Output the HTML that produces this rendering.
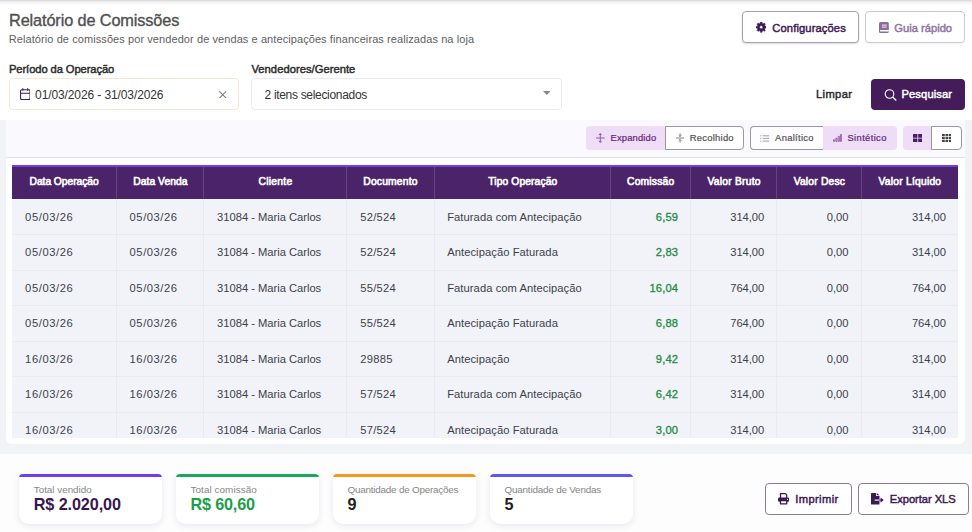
<!DOCTYPE html>
<html>
<head>
<meta charset="utf-8">
<style>
*{box-sizing:border-box;margin:0;padding:0}
html,body{width:972px;height:532px;overflow:hidden;background:#fff;font-family:"Liberation Sans",sans-serif;color:#333}
.abs{position:absolute}
.tx{white-space:pre}
.box{border-radius:4px;background:#fff}
.row{left:12px;width:946px;background:#f2f3f8;border-bottom:1px solid #eaeaf1}
.vl{top:199px;width:1px;height:239px;background:#eaeaf1}
.hl{top:167px;width:1px;height:32px;background:#634681}
.card{top:474px;width:143.300px;height:50px;background:#fff;border-radius:4px 4px 10px 10px;box-shadow:0 2px 6px rgba(60,60,100,.11);overflow:hidden}
.card i{position:absolute;left:0;top:0;width:100%;height:3px}
</style>
</head>
<body>
<!-- backgrounds -->
<div class="abs" style="left:0;top:0;width:972px;height:5px;background:linear-gradient(#d9d9d9,#f3f3f3 45%,#fff)"></div>
<div class="abs" style="left:0;top:120px;width:972px;height:334px;background:#f2f3f7"></div>
<div class="abs" style="left:0;top:454px;width:972px;height:78px;background:#fdfdfe"></div>
<div class="abs" style="left:6px;top:120px;width:959px;height:324px;background:#fff;border-radius:0 0 6px 6px"></div>
<div class="abs" style="left:6px;top:120px;width:959px;height:38px;background:#faf9fe;border-bottom:1px solid #e2dfee"></div>

<!-- table -->
<div class="abs" style="left:12px;top:165px;width:946px;height:273px;overflow:hidden">
  <div class="abs" style="left:0;top:0;width:946px;height:34px;background:#4b2369;border-top:2px solid #6a3ff0"></div>
</div>
<div class="abs row" style="top:199px;height:36px"></div>
<div class="abs row" style="top:235.0px;height:35.5px"></div>
<div class="abs row" style="top:270.5px;height:35.5px"></div>
<div class="abs row" style="top:306.0px;height:35.5px"></div>
<div class="abs row" style="top:341.5px;height:35.5px"></div>
<div class="abs row" style="top:377.0px;height:35.5px"></div>
<div class="abs row" style="border-bottom:none;top:412.5px;height:25.5px"></div>
<div class="abs vl" style="left:115.9px"></div>
<div class="abs hl" style="left:115.9px"></div>
<div class="abs vl" style="left:203.0px"></div>
<div class="abs hl" style="left:203.0px"></div>
<div class="abs vl" style="left:345.9px"></div>
<div class="abs hl" style="left:345.9px"></div>
<div class="abs vl" style="left:434.2px"></div>
<div class="abs hl" style="left:434.2px"></div>
<div class="abs vl" style="left:610.0px"></div>
<div class="abs hl" style="left:610.0px"></div>
<div class="abs vl" style="left:690.0px"></div>
<div class="abs hl" style="left:690.0px"></div>
<div class="abs vl" style="left:776.2px"></div>
<div class="abs hl" style="left:776.2px"></div>
<div class="abs vl" style="left:861.0px"></div>
<div class="abs hl" style="left:861.0px"></div>

<!-- top buttons -->
<div class="abs box" style="left:742px;top:11px;width:117px;height:32px;border:1px solid #aaa0b6;box-shadow:0 1px 2px rgba(0,0,0,.15)"></div>
<div class="abs box" style="left:865px;top:11px;width:100px;height:32px;border:1px solid #cfc8d8;box-shadow:0 1px 1px rgba(0,0,0,.06)"></div>
<svg class="abs" style="left:756px;top:22.300px" width="10.400" height="10.400" viewBox="0 0 16 16"><path fill="#3d1952" fill-rule="evenodd" stroke="#3d1952" stroke-width="0.800" stroke-linejoin="round" d="M6.58 2.07L6.75 0.10L9.25 0.10L9.42 2.07L11.19 2.80L12.70 1.53L14.47 3.30L13.20 4.81L13.93 6.58L15.90 6.75L15.90 9.25L13.93 9.42L13.20 11.19L14.47 12.70L12.70 14.47L11.19 13.20L9.42 13.93L9.25 15.90L6.75 15.90L6.58 13.93L4.81 13.20L3.30 14.47L1.53 12.70L2.80 11.19L2.07 9.42L0.10 9.25L0.10 6.75L2.07 6.58L2.80 4.81L1.53 3.30L3.30 1.53L4.81 2.80ZM10.50 8.00A2.5 2.5 0 1 0 5.50 8.00A2.5 2.5 0 1 0 10.50 8.00Z"/></svg>
<svg class="abs" style="left:878.900px;top:21.800px" width="9.800" height="11" viewBox="0 0 9.800 11"><rect x="0" y="0" width="9.800" height="11" rx="1.600" fill="#8c6c9e"/><path stroke="#fff" stroke-width=".9" d="M2.900 3.100h4.800M2.900 5.100h4.800"/><path fill="#fff" d="M1.600 8h8.200v1.500H1.600a.75.750 0 010-1.500z"/></svg>

<!-- inputs -->
<div class="abs box" style="left:9px;top:78px;width:230px;height:32px;border:1px solid #f5e8d2"></div>
<svg class="abs" style="left:19.900px;top:87.600px" width="10.600" height="12.400" viewBox="0 0 10.600 12.400"><rect x=".55" y="1.750" width="9.500" height="9.900" rx="1.300" fill="none" stroke="#3a1c5c" stroke-width="1.100"/><path fill="none" stroke="#3a1c5c" stroke-width="1.100" d="M.55 5.200h9.500M2.750.300v2.400M7.650.300v2.400"/></svg>
<svg class="abs" style="left:219px;top:90.500px" width="7.500" height="7.500" viewBox="0 0 8 8"><path stroke="#7c7c7c" stroke-width="1.150" fill="none" d="M.4.400l7.200 7.200M7.600.4L.4 7.600"/></svg>
<div class="abs box" style="left:251px;top:78px;width:311px;height:32px;border:1px solid #ebebeb"></div>
<svg class="abs" style="left:542.700px;top:91.200px" width="7.600" height="4" viewBox="0 0 8 4"><path fill="#8a8a8a" d="M0 0h8L4 4z"/></svg>

<div class="abs box" style="left:871.300px;top:78.700px;width:94px;height:31.100px;background:#451c5a"></div>
<svg class="abs" style="left:883.700px;top:88.500px" width="13" height="12" viewBox="0 0 13 12"><circle cx="5.500" cy="5" r="4.300" fill="none" stroke="#fff" stroke-width="1.100"/><path stroke="#fff" stroke-width="1.300" d="M8.600 8.100l3.700 3.300"/></svg>

<!-- toggles -->
<div class="abs" style="left:585.500px;top:126px;width:80px;height:24px;background:#efdcf6;border-radius:4px 0 0 4px"></div>
<div class="abs" style="left:665px;top:126px;width:79px;height:24px;background:#fff;border:1px solid #999;border-radius:0 4px 4px 0"></div>
<div class="abs" style="left:750px;top:126px;width:72.500px;height:24px;background:#fdfcff;border:1px solid #999;border-right:none;border-radius:4px 0 0 4px"></div>
<div class="abs" style="left:822.500px;top:126px;width:74px;height:24px;background:#efdcf6;border-radius:0 4px 4px 0"></div>
<div class="abs" style="left:903px;top:126px;width:28.500px;height:24px;background:#efdcf6;border-radius:4px 0 0 4px"></div>
<div class="abs" style="left:931px;top:126px;width:30.500px;height:24px;background:#fff;border:1px solid #999;border-radius:0 4px 4px 0"></div>

<!-- expandido icon -->
<svg class="abs" style="left:596px;top:133px" width="8.600" height="10" viewBox="0 0 8.600 10"><path fill="none" stroke="#8d5aa5" stroke-width="1" d="M0 5h8.600M4.300 .6v8.800M2.800 2.100L4.300.6l1.500 1.500M2.800 7.900l1.500 1.500 1.500-1.500"/></svg>
<!-- recolhido icon -->
<svg class="abs" style="left:676px;top:133px" width="8.200" height="10" viewBox="0 0 8.200 10"><path fill="none" stroke="#808080" stroke-width="1" d="M0 5h8.200M4.100 .3v3.200M4.100 6.500v3.200M2.800 2.300l1.300 1.300 1.300-1.300M2.800 7.700l1.300-1.300 1.300 1.300"/></svg>
<!-- analitico icon -->
<svg class="abs" style="left:760.200px;top:134.600px" width="9" height="7" viewBox="0 0 9 7"><path fill="none" stroke="#8a8a8a" stroke-width="0.800" d="M2.600 .8H9M2.600 3.400H9M2.600 6.100H9M.2 .8h1.100M.2 3.400h1.100M.2 6.100h1.100"/></svg>
<!-- sintetico icon -->
<svg class="abs" style="left:833px;top:134.300px" width="9" height="7.800" viewBox="0 0 9 7.800"><path fill="none" stroke="#8650a0" stroke-width="0.800" d="M.4 7.400V5.800h1.200v1.600zM2.800 7.400V4.200h1.200v3.200zM5.200 7.400V2.400h1.200v5zM7.500 7.400V.4h1.100v7z"/></svg>
<!-- grid 2x2 -->
<svg class="abs" style="left:912.600px;top:133.900px" width="9.600" height="8.200" viewBox="0 0 9.600 8.200"><path fill="#4b1d63" d="M0 0h4.400v3.700H0zM5.200 0h4.400v3.700H5.200zM0 4.500h4.400v3.700H0zM5.200 4.500h4.400v3.700H5.200z"/></svg>
<!-- grid 3x3 -->
<svg class="abs" style="left:941.600px;top:133.900px" width="9.800" height="8.200" viewBox="0 0 9.800 8.200"><path fill="#444" d="M0 0h2.800v2.200H0zM3.500 0h2.800v2.200H3.500zM7 0h2.800v2.200H7zM0 3h2.800v2.200H0zM3.500 3h2.800v2.200H3.500zM7 3h2.800v2.200H7zM0 6h2.800v2.200H0zM3.500 6h2.800v2.200H3.500zM7 6h2.800v2.200H7z"/></svg>



<!-- cards -->
<div class="abs card" style="left:19.200px"><i style="background:#6a3ff0"></i></div>
<div class="abs card" style="left:176.200px"><i style="background:#1aa860"></i></div>
<div class="abs card" style="left:333.200px"><i style="background:#f39a1c"></i></div>
<div class="abs card" style="left:490.100px"><i style="background:#5b57f0"></i></div>

<div class="abs box" style="left:765px;top:483px;width:87px;height:32px;border:1px solid #8d7a9e"></div>
<div class="abs box" style="left:858px;top:483px;width:111px;height:32px;border:1px solid #8d7a9e"></div>

<!-- printer -->
<svg class="abs" style="left:778px;top:493.200px" width="11.200" height="11.600" viewBox="0 0 11.200 11.600"><path fill="#fff" stroke="#3d1952" stroke-width="1.300" stroke-linejoin="round" d="M2.500 5V.65H7.400L8.700 1.900V5"/><rect x="0" y="4.500" width="11.200" height="4.300" rx="1.400" fill="#3d1952"/><circle cx="9.400" cy="6.400" r=".55" fill="#fff"/><rect x="2.500" y="7.500" width="6.200" height="3.400" fill="#fff" stroke="#3d1952" stroke-width="1.300" stroke-linejoin="round"/></svg>
<!-- file export -->
<svg class="abs" style="left:871.200px;top:493.200px" width="12.700" height="11.500" viewBox="0 0 12.700 11.500"><path fill="#3d1952" d="M.6 0H5V3H8.500V10.900a.6.600 0 01-.6.600H.6a.6.600 0 01-.6-.6V.6A.6.600 0 01.6 0zM5.800 0L8.500 2.300H5.800zM9.600 4.500L12.700 7.100 9.600 9.700z"/><rect x="3.700" y="6.550" width="4.800" height="1.100" fill="#fff"/><rect x="8.500" y="6.550" width="1.500" height="1.100" fill="#3d1952"/></svg>
<div class="abs tx" style="left:9.00px;top:10.05px;font-size:16.3px;line-height:20px;color:#505050;letter-spacing:-0.121px;-webkit-text-stroke:0.35px #505050;">Relatório de Comissões</div>
<div class="abs tx" style="left:8.75px;top:31.89px;font-size:11px;line-height:14px;color:#606060;letter-spacing:0.081px;">Relatório de comissões por vendedor de vendas e antecipações financeiras realizadas na loja</div>
<div class="abs tx" style="left:9.00px;top:62.12px;font-size:11.2px;line-height:14px;color:#2b2b2b;letter-spacing:-0.096px;-webkit-text-stroke:0.45px #2b2b2b;">Período da Operação</div>
<div class="abs tx" style="left:251.50px;top:62.12px;font-size:11.2px;line-height:14px;color:#2b2b2b;letter-spacing:0.029px;-webkit-text-stroke:0.45px #2b2b2b;">Vendedores/Gerente</div>
<div class="abs tx" style="left:35.10px;top:87.74px;font-size:12.0px;line-height:15px;color:#333;letter-spacing:-0.108px;">01/03/2026 - 31/03/2026</div>
<div class="abs tx" style="left:264.50px;top:87.74px;font-size:12.0px;line-height:15px;color:#333;letter-spacing:-0.316px;">2 itens selecionados</div>
<div class="abs tx" style="left:816.00px;top:87.32px;font-size:11.2px;line-height:14px;color:#2b2b2b;letter-spacing:0.359px;-webkit-text-stroke:0.45px #2b2b2b;">Limpar</div>
<div class="abs tx" style="left:901.50px;top:87.32px;font-size:11.2px;line-height:14px;color:#fff;letter-spacing:0.094px;-webkit-text-stroke:0.45px #fff;">Pesquisar</div>
<div class="abs tx" style="left:772.30px;top:21.02px;font-size:11.2px;line-height:14px;color:#3d1952;letter-spacing:0.113px;-webkit-text-stroke:0.45px #3d1952;">Configurações</div>
<div class="abs tx" style="left:894.30px;top:21.02px;font-size:11.2px;line-height:14px;color:#8f73a3;letter-spacing:-0.004px;-webkit-text-stroke:0.45px #8f73a3;">Guia rápido</div>
<div class="abs tx" style="left:610.50px;top:132.44px;font-size:9.4px;line-height:12px;color:#632878;letter-spacing:0.173px;-webkit-text-stroke:0.22px #632878;">Expandido</div>
<div class="abs tx" style="left:689.80px;top:132.44px;font-size:9.4px;line-height:12px;color:#555;letter-spacing:0.262px;-webkit-text-stroke:0.22px #555;">Recolhido</div>
<div class="abs tx" style="left:775.10px;top:132.44px;font-size:9.4px;line-height:12px;color:#555;letter-spacing:0.304px;-webkit-text-stroke:0.22px #555;">Analítico</div>
<div class="abs tx" style="left:847.50px;top:132.44px;font-size:9.4px;line-height:12px;color:#632878;letter-spacing:0.366px;-webkit-text-stroke:0.22px #632878;">Sintético</div>
<div class="abs tx" style="left:29.50px;top:175.13px;font-size:10.3px;line-height:13px;color:#fff;letter-spacing:-0.049px;-webkit-text-stroke:0.6px #fff;">Data Operação</div>
<div class="abs tx" style="left:133.25px;top:175.13px;font-size:10.3px;line-height:13px;color:#fff;letter-spacing:0.047px;-webkit-text-stroke:0.6px #fff;">Data Venda</div>
<div class="abs tx" style="left:258.50px;top:175.13px;font-size:10.3px;line-height:13px;color:#fff;letter-spacing:0.281px;-webkit-text-stroke:0.6px #fff;">Cliente</div>
<div class="abs tx" style="left:363.25px;top:175.13px;font-size:10.3px;line-height:13px;color:#fff;letter-spacing:0.199px;-webkit-text-stroke:0.6px #fff;">Documento</div>
<div class="abs tx" style="left:488.25px;top:175.13px;font-size:10.3px;line-height:13px;color:#fff;letter-spacing:0.105px;-webkit-text-stroke:0.6px #fff;">Tipo Operação</div>
<div class="abs tx" style="left:627.00px;top:175.13px;font-size:10.3px;line-height:13px;color:#fff;letter-spacing:0.210px;-webkit-text-stroke:0.6px #fff;">Comissão</div>
<div class="abs tx" style="left:707.50px;top:175.13px;font-size:10.3px;line-height:13px;color:#fff;letter-spacing:0.225px;-webkit-text-stroke:0.6px #fff;">Valor Bruto</div>
<div class="abs tx" style="left:793.70px;top:175.13px;font-size:10.3px;line-height:13px;color:#fff;letter-spacing:0.178px;-webkit-text-stroke:0.6px #fff;">Valor Desc</div>
<div class="abs tx" style="left:878.40px;top:175.13px;font-size:10.3px;line-height:13px;color:#fff;letter-spacing:0.232px;-webkit-text-stroke:0.6px #fff;">Valor Líquido</div>
<div class="abs tx" style="left:33.75px;top:484.27px;font-size:9.9px;line-height:12px;color:#858585;letter-spacing:-0.017px;">Total vendido</div>
<div class="abs tx" style="left:33.75px;top:494.39px;font-size:16.2px;line-height:20px;color:#3a1650;letter-spacing:-0.095px;font-weight:bold;">R$ 2.020,00</div>
<div class="abs tx" style="left:190.50px;top:484.27px;font-size:9.9px;line-height:12px;color:#858585;letter-spacing:0.072px;">Total comissão</div>
<div class="abs tx" style="left:190.50px;top:494.39px;font-size:16.2px;line-height:20px;color:#1a9e4a;letter-spacing:-0.172px;font-weight:bold;">R$ 60,60</div>
<div class="abs tx" style="left:347.50px;top:484.27px;font-size:9.9px;line-height:12px;color:#858585;letter-spacing:-0.220px;">Quantidade de Operações</div>
<div class="abs tx" style="left:347.50px;top:494.39px;font-size:16.2px;line-height:20px;color:#222;letter-spacing:0.000px;font-weight:bold;">9</div>
<div class="abs tx" style="left:504.50px;top:484.27px;font-size:9.9px;line-height:12px;color:#858585;letter-spacing:-0.197px;">Quantidade de Vendas</div>
<div class="abs tx" style="left:504.50px;top:494.39px;font-size:16.2px;line-height:20px;color:#222;letter-spacing:0.000px;font-weight:bold;">5</div>
<div class="abs tx" style="left:795.25px;top:492.37px;font-size:11.2px;line-height:14px;color:#3d1952;letter-spacing:0.371px;-webkit-text-stroke:0.45px #3d1952;">Imprimir</div>
<div class="abs tx" style="left:889.75px;top:492.37px;font-size:11.2px;line-height:14px;color:#3d1952;letter-spacing:-0.050px;-webkit-text-stroke:0.45px #3d1952;">Exportar XLS</div>
<div class="abs tx" style="left:25.10px;top:209.87px;font-size:11.2px;line-height:14px;color:#3a3f4a;letter-spacing:0.577px;">05/03/26</div>
<div class="abs tx" style="left:129.60px;top:209.87px;font-size:11.2px;line-height:14px;color:#3a3f4a;letter-spacing:0.548px;">05/03/26</div>
<div class="abs tx" style="left:217.10px;top:209.87px;font-size:11.2px;line-height:14px;color:#3a3f4a;letter-spacing:-0.019px;">31084 - Maria Carlos</div>
<div class="abs tx" style="left:360.20px;top:209.87px;font-size:11.2px;line-height:14px;color:#3a3f4a;letter-spacing:0.276px;">52/524</div>
<div class="abs tx" style="left:447.20px;top:209.87px;font-size:11.2px;line-height:14px;color:#3a3f4a;letter-spacing:0.065px;">Faturada com Antecipação</div>
<div class="abs tx" style="right:293.86px;top:209.87px;font-size:11.2px;line-height:14px;color:#1f8a47;letter-spacing:0.140px;-webkit-text-stroke:0.3px #1f8a47;">6,59</div>
<div class="abs tx" style="right:207.79px;top:209.87px;font-size:11.2px;line-height:14px;color:#3a3f4a;letter-spacing:-0.044px;">314,00</div>
<div class="abs tx" style="right:123.66px;top:209.87px;font-size:11.2px;line-height:14px;color:#3a3f4a;letter-spacing:-0.060px;">0,00</div>
<div class="abs tx" style="right:26.14px;top:209.87px;font-size:11.2px;line-height:14px;color:#3a3f4a;letter-spacing:-0.044px;">314,00</div>
<div class="abs tx" style="left:25.10px;top:245.37px;font-size:11.2px;line-height:14px;color:#3a3f4a;letter-spacing:0.577px;">05/03/26</div>
<div class="abs tx" style="left:129.60px;top:245.37px;font-size:11.2px;line-height:14px;color:#3a3f4a;letter-spacing:0.548px;">05/03/26</div>
<div class="abs tx" style="left:217.10px;top:245.37px;font-size:11.2px;line-height:14px;color:#3a3f4a;letter-spacing:-0.019px;">31084 - Maria Carlos</div>
<div class="abs tx" style="left:360.20px;top:245.37px;font-size:11.2px;line-height:14px;color:#3a3f4a;letter-spacing:0.276px;">52/524</div>
<div class="abs tx" style="left:447.20px;top:245.37px;font-size:11.2px;line-height:14px;color:#3a3f4a;letter-spacing:0.065px;">Antecipação Faturada</div>
<div class="abs tx" style="right:293.86px;top:245.37px;font-size:11.2px;line-height:14px;color:#1f8a47;letter-spacing:0.140px;-webkit-text-stroke:0.3px #1f8a47;">2,83</div>
<div class="abs tx" style="right:207.79px;top:245.37px;font-size:11.2px;line-height:14px;color:#3a3f4a;letter-spacing:-0.044px;">314,00</div>
<div class="abs tx" style="right:123.66px;top:245.37px;font-size:11.2px;line-height:14px;color:#3a3f4a;letter-spacing:-0.060px;">0,00</div>
<div class="abs tx" style="right:26.14px;top:245.37px;font-size:11.2px;line-height:14px;color:#3a3f4a;letter-spacing:-0.044px;">314,00</div>
<div class="abs tx" style="left:25.10px;top:280.87px;font-size:11.2px;line-height:14px;color:#3a3f4a;letter-spacing:0.577px;">05/03/26</div>
<div class="abs tx" style="left:129.60px;top:280.87px;font-size:11.2px;line-height:14px;color:#3a3f4a;letter-spacing:0.548px;">05/03/26</div>
<div class="abs tx" style="left:217.10px;top:280.87px;font-size:11.2px;line-height:14px;color:#3a3f4a;letter-spacing:-0.019px;">31084 - Maria Carlos</div>
<div class="abs tx" style="left:360.20px;top:280.87px;font-size:11.2px;line-height:14px;color:#3a3f4a;letter-spacing:0.276px;">55/524</div>
<div class="abs tx" style="left:447.20px;top:280.87px;font-size:11.2px;line-height:14px;color:#3a3f4a;letter-spacing:0.065px;">Faturada com Antecipação</div>
<div class="abs tx" style="right:293.86px;top:280.87px;font-size:11.2px;line-height:14px;color:#1f8a47;letter-spacing:0.140px;-webkit-text-stroke:0.3px #1f8a47;">16,04</div>
<div class="abs tx" style="right:207.79px;top:280.87px;font-size:11.2px;line-height:14px;color:#3a3f4a;letter-spacing:-0.044px;">764,00</div>
<div class="abs tx" style="right:123.66px;top:280.87px;font-size:11.2px;line-height:14px;color:#3a3f4a;letter-spacing:-0.060px;">0,00</div>
<div class="abs tx" style="right:26.14px;top:280.87px;font-size:11.2px;line-height:14px;color:#3a3f4a;letter-spacing:-0.044px;">764,00</div>
<div class="abs tx" style="left:25.10px;top:316.37px;font-size:11.2px;line-height:14px;color:#3a3f4a;letter-spacing:0.577px;">05/03/26</div>
<div class="abs tx" style="left:129.60px;top:316.37px;font-size:11.2px;line-height:14px;color:#3a3f4a;letter-spacing:0.548px;">05/03/26</div>
<div class="abs tx" style="left:217.10px;top:316.37px;font-size:11.2px;line-height:14px;color:#3a3f4a;letter-spacing:-0.019px;">31084 - Maria Carlos</div>
<div class="abs tx" style="left:360.20px;top:316.37px;font-size:11.2px;line-height:14px;color:#3a3f4a;letter-spacing:0.276px;">55/524</div>
<div class="abs tx" style="left:447.20px;top:316.37px;font-size:11.2px;line-height:14px;color:#3a3f4a;letter-spacing:0.065px;">Antecipação Faturada</div>
<div class="abs tx" style="right:293.86px;top:316.37px;font-size:11.2px;line-height:14px;color:#1f8a47;letter-spacing:0.140px;-webkit-text-stroke:0.3px #1f8a47;">6,88</div>
<div class="abs tx" style="right:207.79px;top:316.37px;font-size:11.2px;line-height:14px;color:#3a3f4a;letter-spacing:-0.044px;">764,00</div>
<div class="abs tx" style="right:123.66px;top:316.37px;font-size:11.2px;line-height:14px;color:#3a3f4a;letter-spacing:-0.060px;">0,00</div>
<div class="abs tx" style="right:26.14px;top:316.37px;font-size:11.2px;line-height:14px;color:#3a3f4a;letter-spacing:-0.044px;">764,00</div>
<div class="abs tx" style="left:25.10px;top:351.87px;font-size:11.2px;line-height:14px;color:#3a3f4a;letter-spacing:0.577px;">16/03/26</div>
<div class="abs tx" style="left:129.60px;top:351.87px;font-size:11.2px;line-height:14px;color:#3a3f4a;letter-spacing:0.548px;">16/03/26</div>
<div class="abs tx" style="left:217.10px;top:351.87px;font-size:11.2px;line-height:14px;color:#3a3f4a;letter-spacing:-0.019px;">31084 - Maria Carlos</div>
<div class="abs tx" style="left:360.20px;top:351.87px;font-size:11.2px;line-height:14px;color:#3a3f4a;letter-spacing:0.276px;">29885</div>
<div class="abs tx" style="left:447.20px;top:351.87px;font-size:11.2px;line-height:14px;color:#3a3f4a;letter-spacing:0.065px;">Antecipação</div>
<div class="abs tx" style="right:293.86px;top:351.87px;font-size:11.2px;line-height:14px;color:#1f8a47;letter-spacing:0.140px;-webkit-text-stroke:0.3px #1f8a47;">9,42</div>
<div class="abs tx" style="right:207.79px;top:351.87px;font-size:11.2px;line-height:14px;color:#3a3f4a;letter-spacing:-0.044px;">314,00</div>
<div class="abs tx" style="right:123.66px;top:351.87px;font-size:11.2px;line-height:14px;color:#3a3f4a;letter-spacing:-0.060px;">0,00</div>
<div class="abs tx" style="right:26.14px;top:351.87px;font-size:11.2px;line-height:14px;color:#3a3f4a;letter-spacing:-0.044px;">314,00</div>
<div class="abs tx" style="left:25.10px;top:387.37px;font-size:11.2px;line-height:14px;color:#3a3f4a;letter-spacing:0.577px;">16/03/26</div>
<div class="abs tx" style="left:129.60px;top:387.37px;font-size:11.2px;line-height:14px;color:#3a3f4a;letter-spacing:0.548px;">16/03/26</div>
<div class="abs tx" style="left:217.10px;top:387.37px;font-size:11.2px;line-height:14px;color:#3a3f4a;letter-spacing:-0.019px;">31084 - Maria Carlos</div>
<div class="abs tx" style="left:360.20px;top:387.37px;font-size:11.2px;line-height:14px;color:#3a3f4a;letter-spacing:0.276px;">57/524</div>
<div class="abs tx" style="left:447.20px;top:387.37px;font-size:11.2px;line-height:14px;color:#3a3f4a;letter-spacing:0.065px;">Faturada com Antecipação</div>
<div class="abs tx" style="right:293.86px;top:387.37px;font-size:11.2px;line-height:14px;color:#1f8a47;letter-spacing:0.140px;-webkit-text-stroke:0.3px #1f8a47;">6,42</div>
<div class="abs tx" style="right:207.79px;top:387.37px;font-size:11.2px;line-height:14px;color:#3a3f4a;letter-spacing:-0.044px;">314,00</div>
<div class="abs tx" style="right:123.66px;top:387.37px;font-size:11.2px;line-height:14px;color:#3a3f4a;letter-spacing:-0.060px;">0,00</div>
<div class="abs tx" style="right:26.14px;top:387.37px;font-size:11.2px;line-height:14px;color:#3a3f4a;letter-spacing:-0.044px;">314,00</div>
<div class="abs tx" style="left:25.10px;top:422.87px;font-size:11.2px;line-height:14px;color:#3a3f4a;letter-spacing:0.577px;">16/03/26</div>
<div class="abs tx" style="left:129.60px;top:422.87px;font-size:11.2px;line-height:14px;color:#3a3f4a;letter-spacing:0.548px;">16/03/26</div>
<div class="abs tx" style="left:217.10px;top:422.87px;font-size:11.2px;line-height:14px;color:#3a3f4a;letter-spacing:-0.019px;">31084 - Maria Carlos</div>
<div class="abs tx" style="left:360.20px;top:422.87px;font-size:11.2px;line-height:14px;color:#3a3f4a;letter-spacing:0.276px;">57/524</div>
<div class="abs tx" style="left:447.20px;top:422.87px;font-size:11.2px;line-height:14px;color:#3a3f4a;letter-spacing:0.065px;">Antecipação Faturada</div>
<div class="abs tx" style="right:293.86px;top:422.87px;font-size:11.2px;line-height:14px;color:#1f8a47;letter-spacing:0.140px;-webkit-text-stroke:0.3px #1f8a47;">3,00</div>
<div class="abs tx" style="right:207.79px;top:422.87px;font-size:11.2px;line-height:14px;color:#3a3f4a;letter-spacing:-0.044px;">314,00</div>
<div class="abs tx" style="right:123.66px;top:422.87px;font-size:11.2px;line-height:14px;color:#3a3f4a;letter-spacing:-0.060px;">0,00</div>
<div class="abs tx" style="right:26.14px;top:422.87px;font-size:11.2px;line-height:14px;color:#3a3f4a;letter-spacing:-0.044px;">314,00</div>
</body>
</html>
